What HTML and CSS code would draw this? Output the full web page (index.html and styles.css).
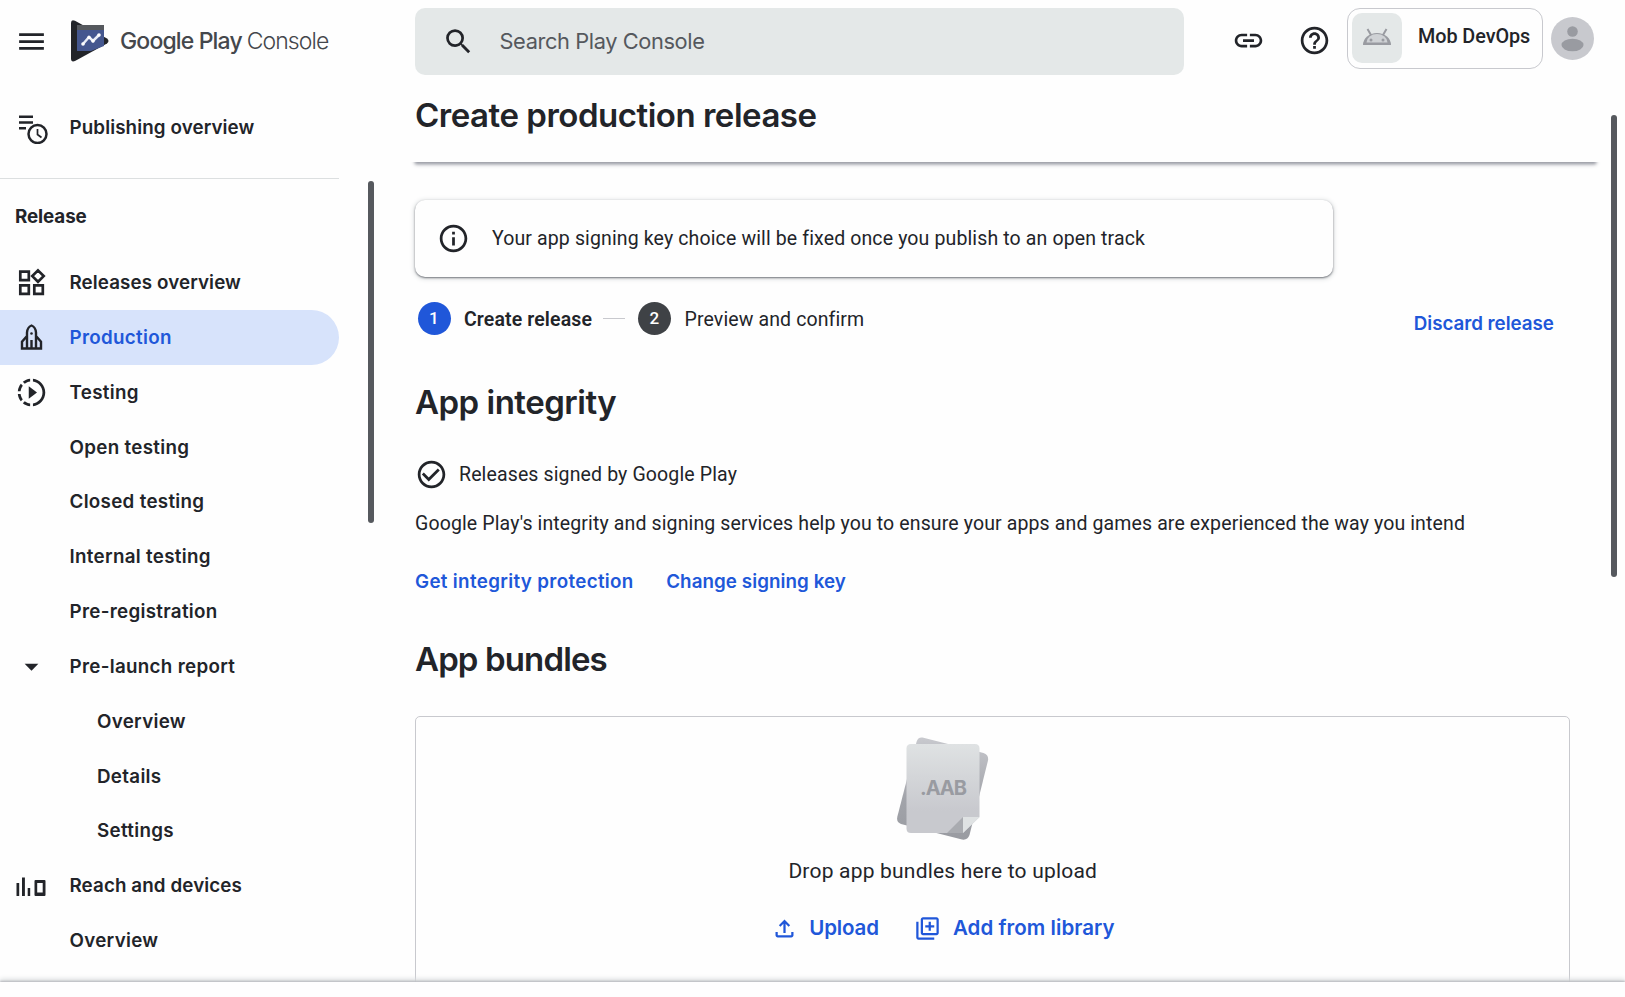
FILE: index.html
```html
<!DOCTYPE html>
<html lang="en">
<head>
<meta charset="utf-8">
<title>Google Play Console</title>
<link rel="stylesheet" href="styles.css">
</head>
<body>
<header class="topbar">
  <div class="brand">
    <svg class="icon" viewBox="0 0 24 24"><path d="M3 18h18v-2H3v2zm0-5h18v-2H3v2zm0-7v2h18V6H3z"/></svg>
    <svg class="logo" viewBox="0 0 38 42"><path d="M0 3Q0-1 4 .8L36 18.500Q39 21 36 23.500L4 41Q0 42.500 0 38.500Z" fill="#222429"/><path d="M6 5h27v21L20 31H6Z" fill="#45578f"/><path d="M6 5h27v5H6Z" fill="#55585d"/><path d="M12 24l6-7 4 4 6-6" fill="none" stroke="#e8ecf6" stroke-width="2.500"/><g fill="#fff"><circle cx="12" cy="24" r="1.800"/><circle cx="18" cy="17.500" r="1.800"/><circle cx="22" cy="21" r="1.800"/><circle cx="28" cy="15" r="1.800"/></g></svg>
    <div class="wordmark"><span class="wm-play">Google Play</span><span class="wm-console">Console</span></div>
  </div>
  <div class="search">
    <svg class="icon" viewBox="0 0 24 24"><path d="M15.500 14h-.79l-.28-.27A6.471 6.471 0 0 0 16 9.500 6.500 6.500 0 1 0 9.500 16c1.610 0 3.090-.59 4.230-1.570l.27.28v.79l5 4.990L20.490 19l-4.990-5zm-6 0C7.010 14 5 11.990 5 9.500S7.010 5 9.500 5 14 7.010 14 9.500 11.990 14 9.500 14z"/></svg>
    <span class="search-text">Search Play Console</span>
  </div>
  <div class="actions">
    <svg class="icon" viewBox="0 0 24 24"><path d="M3.900 12c0-1.710 1.390-3.100 3.100-3.100h4V7H7c-2.760 0-5 2.240-5 5s2.240 5 5 5h4v-1.900H7c-1.710 0-3.100-1.390-3.100-3.100zM8 13h8v-2H8v2zm9-6h-4v1.900h4c1.710 0 3.100 1.390 3.100 3.100s-1.390 3.100-3.100 3.100h-4V17h4c2.760 0 5-2.240 5-5s-2.240-5-5-5z"/></svg>
    <svg class="icon help" viewBox="0 0 24 24"><path d="M11 18h2v-2h-2v2zm1-16C6.480 2 2 6.480 2 12s4.480 10 10 10 10-4.480 10-10S17.520 2 12 2zm0 18c-4.410 0-8-3.590-8-8s3.590-8 8-8 8 3.590 8 8-3.590 8-8 8zm0-14c-2.210 0-4 1.790-4 4h2c0-1.100.9-2 2-2s2 .9 2 2c0 2-3 1.750-3 5h2c0-2.250 3-2.500 3-5 0-2.210-1.790-4-4-4z"/></svg>
    <div class="account">
      <div class="app-thumb"><svg width="30" height="18" viewBox="0 0 30 18"><path d="M1 17a14 12 0 0 1 28 0Z" fill="#999ba1"/><path d="M4.500 14.500a10.500 8.500 0 0 1 21 0Z" fill="#cfd2d5"/><path d="M5.500 1l3.500 6M24.500 1L21 7" stroke="#999ba1" stroke-width="2"/><circle cx="9" cy="12" r="1.500" fill="#999ba1"/><circle cx="21" cy="12" r="1.500" fill="#999ba1"/></svg></div>
      <span class="account-name">Mob DevOps</span>
    </div>
    <svg class="avatar" viewBox="0 0 43 43"><circle cx="21.500" cy="21.500" r="21.500" fill="#c8c9ce"/><circle cx="21.500" cy="14.500" r="5.300" fill="#999ba1"/><ellipse cx="21.500" cy="28" rx="11" ry="6.300" fill="#999ba1"/></svg>
  </div>
</header>
<div class="body">
  <div class="side">
    <nav class="nav">
      <a class="item tight"><svg class="icon" viewBox="0 0 33 33"><path d="M4 4.500h14v2.600H4zM4 10.200h14v2.600H4zM4 16h7v2.400H4z"/><circle cx="22.500" cy="23" r="10.800" fill="#fefefe"/><circle cx="22.500" cy="23" r="9" fill="none" stroke="#222429" stroke-width="2.500"/><path d="M22.500 18v5.500l4 3" fill="none" stroke="#222429" stroke-width="1.700"/></svg><span>Publishing overview</span></a>
      <h2 class="group"><span>Release</span></h2>
      <a class="item tight"><svg class="icon" viewBox="0 0 33 33"><path d="M5.300 5.700h8.500v8.500H5.300zM5.300 19.300h8.500v8.500H5.300zM19.300 19.300h8.500v8.500h-8.500zM23 4.400l5.700 5.700-5.700 5.700-5.700-5.700z" fill="none" stroke="#222429" stroke-width="2.700"/></svg><span>Releases overview</span></a>
      <a class="item active"><svg class="icon" viewBox="0 0 33 33"><path d="M12 27.500V11.500Q12.500 6 16.500 4.500Q20.500 6 21 11.500V27.500M12 15L7 20.800V27.500H26V20.800L21 15M16.500 19v8" fill="none" stroke="#222429" stroke-width="2.400"/><circle cx="16.500" cy="12.500" r="1.300"/></svg><span>Production</span></a>
      <a class="item"><svg class="icon" viewBox="0 0 24 24"><path d="M10 7.500v9l6-4.500zM11 4.070V2.050c-2.010.2-3.840 1-5.320 2.210L7.100 5.690c1.110-.86 2.440-1.440 3.900-1.620zM5.690 7.100L4.260 5.680C3.050 7.160 2.250 8.990 2.050 11h2.020c.18-1.460.76-2.790 1.620-3.900zM4.070 13H2.050c.2 2.010 1 3.840 2.210 5.320l1.430-1.430c-.86-1.100-1.440-2.430-1.620-3.890zm1.610 6.740C7.160 20.950 9 21.750 11 21.950v-2.020c-1.460-.18-2.790-.76-3.900-1.620l-1.420 1.430zM22 12c0 5.160-3.920 9.420-8.950 9.950v-2.020C16.970 19.410 20 16.050 20 12s-3.030-7.410-6.950-7.930V2.050C18.080 2.580 22 6.840 22 12z"/></svg><span>Testing</span></a>
      <a class="item sub"><span>Open testing</span></a>
      <a class="item sub"><span>Closed testing</span></a>
      <a class="item sub"><span>Internal testing</span></a>
      <a class="item sub"><span>Pre-registration</span></a>
      <a class="item"><svg class="icon" viewBox="0 0 24 24"><path d="M7 10l5 5 5-5z"/></svg><span>Pre-launch report</span></a>
      <a class="item sub deep"><span>Overview</span></a>
      <a class="item sub deep"><span>Details</span></a>
      <a class="item sub deep"><span>Settings</span></a>
      <a class="item tight"><svg class="icon" viewBox="0 0 33 33"><path d="M1.500 14h2.700v13H1.500zM7 8.500h2.900V27H7zM12.700 19h2.500v8h-2.500z"/><path fill-rule="evenodd" d="M20.500 11q-1 0-1 1v14q0 1 1 1h9q1 0 1-1v-14q0-1-1-1zM22.200 14h5.500v9.500h-5.500z"/></svg><span>Reach and devices</span></a>
      <a class="item sub"><span>Overview</span></a>
    </nav>
    <div class="thumb side-thumb"></div>
  </div>
  <main class="main">
    <div class="page-head"><h1>Create production release</h1></div>
    <section class="notice">
      <svg class="icon" viewBox="0 0 24 24"><path d="M11 7h2v2h-2zm0 4h2v6h-2zm1-9C6.480 2 2 6.480 2 12s4.480 10 10 10 10-4.480 10-10S17.520 2 12 2zm0 18c-4.410 0-8-3.590-8-8s3.590-8 8-8 8 3.590 8 8-3.590 8-8 8z"/></svg>
      <span>Your app signing key choice will be fixed once you publish to an open track</span>
    </section>
    <div class="steps">
      <span class="dot current">1</span><span class="step-name strong">Create release</span>
      <span class="dash"></span>
      <span class="dot">2</span><span class="step-name">Preview and confirm</span>
      <a class="link discard">Discard release</a>
    </div>
    <h2 class="section integrity">App integrity</h2>
    <div class="signed">
      <svg class="icon" viewBox="0 0 24 24"><path d="M16.590 7.580L10 14.170l-3.590-3.580L5 12l5 5 8-8zM12 2C6.480 2 2 6.480 2 12s4.480 10 10 10 10-4.480 10-10S17.520 2 12 2zm0 18c-4.420 0-8-3.580-8-8s3.580-8 8-8 8 3.580 8 8-3.580 8-8 8z"/></svg>
      <span>Releases signed by Google Play</span>
    </div>
    <p class="desc">Google Play's integrity and signing services help you to ensure your apps and games are experienced the way you intend</p>
    <div class="links"><a class="link protect">Get integrity protection</a><a class="link">Change signing key</a></div>
    <h2 class="section bundles">App bundles</h2>
    <section class="dropzone">
      <svg class="file" viewBox="0 0 92 103">
        <defs><linearGradient id="sheet" x1="0" y1="0" x2="0" y2="1"><stop offset="0" stop-color="#dfe2e3"/><stop offset=".75" stop-color="#c8c9ce"/></linearGradient><linearGradient id="back" x1="0" y1="0" x2="0" y2="1"><stop offset="0" stop-color="#c8c9ce"/><stop offset=".6" stop-color="#a2a4aa"/><stop offset="1" stop-color="#999ba1"/></linearGradient></defs>
        <path d="M25.500.600L86.500 16Q92 18 91 23.500L72.500 98Q70.500 103.500 65 102.500L4 87Q-1 85 .400 79.500L19.500 5Q21 0 25.500.600Z" fill="url(#back)"/>
        <path d="M14 7H78Q82.500 7 82.500 11.500V80L66 96H14Q9.500 96 9.500 91.500V11.500Q9.500 7 14 7Z" fill="url(#sheet)"/>
        <path d="M66 80L50 96H66Z" fill="#a9abb0"/><path d="M66 80H82.500L66 96Z" fill="#dfe2e3"/>
        <text x="23" y="58" textLength="47" class="file-ext">.AAB</text>
      </svg>
      <div class="drop-text">Drop app bundles here to upload</div>
      <div class="drop-actions">
        <a class="link upload"><svg class="icon small" viewBox="0 -960 960 960"><path d="M440-320v-326L336-542l-56-58 200-200 200 200-56 58-104-104v326h-80ZM240-160q-33 0-56.500-23.500T160-240v-120h80v120h480v-120h80v120q0 33-23.500 56.500T720-160H240Z"/></svg><span>Upload</span></a>
        <a class="link"><svg class="icon small" viewBox="0 0 24 24"><path d="M4 6H2v14c0 1.100.9 2 2 2h14v-2H4V6zm16-4H8c-1.100 0-2 .9-2 2v12c0 1.100.9 2 2 2h12c1.100 0 2-.9 2-2V4c0-1.100-.9-2-2-2zm0 14H8V4h12v12zM13 14h2v-3h3V9h-3V6h-2v3h-3v2h3z"/></svg><span>Add from library</span></a>
      </div>
    </section>
  </main>
  <div class="thumb main-thumb"></div>
</div>
<footer class="footer"></footer>
</body>
</html>
```
FILE: styles.css
```css
* { box-sizing: border-box; }
body {
  margin: 0;
  width: 1625px;
  height: 997px;
  overflow: hidden;
  display: flex;
  flex-direction: column;
  background: #fefefe;
  color: #222429;
  font-family: Inter, "Liberation Sans", sans-serif;
  font-size: 18.8px;
}
h1, h2, p { margin: 0; }
span, a, p { white-space: nowrap; }
.icon { width: 33px; height: 33px; flex: none; fill: #222429; display: block; }

/* Top bar */
.topbar { height: 82px; flex: none; display: flex; align-items: flex-start; }
.brand { width: 415px; height: 82px; padding-left: 15px; display: flex; align-items: center; }
.logo { width: 38px; height: 42px; margin-left: 23px; }
.wordmark { display: flex; gap: 5px; margin-left: 11px; line-height: 32px; font-size: 23px; color: #44474c; }
.wm-play { font-weight: 500; letter-spacing: -.85px; }
.wm-console { font-weight: 300; letter-spacing: -.95px; }
.search { width: 769px; height: 67px; margin-top: 8px; padding-left: 27px; border-radius: 10px; background: #e4e8e8; display: flex; align-items: center; }
.search-text { margin-left: 24.5px; padding-bottom: 1px; font-size: 21.8px; letter-spacing: -.39px; line-height: 30px; color: #55585d; }
.actions { display: flex; align-items: flex-start; margin-left: 48px; }
.actions > .icon { margin-top: 24px; }
.actions > .help { margin-left: 32.5px; }
.account { width: 196px; height: 61px; margin: 8px 0 0 16.5px; padding: 4px; border: 1.5px solid #c8c9ce; border-radius: 13px; display: flex; font-family: Roboto, sans-serif; font-weight: 500; font-size: 19.8px; letter-spacing: -.05px; }
.app-thumb { width: 50px; height: 50px; border-radius: 10px; background: #e4e8e8; display: flex; align-items: center; justify-content: center; padding-bottom: 3px; }
.account-name { margin-left: 16px; line-height: 48px; }
.avatar { width: 43px; height: 43px; margin: 16.5px 0 0 8px; }

/* Sidebar */
.body { flex: 1; min-height: 0; display: flex; }
.side { width: 415px; flex: none; display: flex; }
.nav { width: 338.5px; padding-top: 18px; }
.item { height: 54.83px; display: flex; align-items: center; padding-left: 15px; font-weight: 560; letter-spacing: .3px; }
.item > .icon { margin-right: 21.5px; }
.item.tight { letter-spacing: .1px; }
.item.sub { padding-left: 69.5px; }
.item.deep { padding-left: 97px; }
.group { height: 77.4px; margin-top: 23px; padding-left: 15px; border-top: 1.5px solid #dcdfe0; line-height: 76px; font-size: 18.8px; font-weight: 650; letter-spacing: -.1px; }
.active { background: #d7e3fb; border-radius: 0 28px 28px 0; color: #2057d9; }
.thumb { width: 6px; border-radius: 3px; background: #56595e; flex: none; }
.side-thumb { height: 342px; margin: 98.500px 0 0 29.5px; }
.main-thumb { height: 462px; margin: 33px 0 0 15px; }

/* Release form */
.main { width: 1181px; flex: none; }
.page-head { height: 80px; position: relative; }
.page-head::after { content: ""; position: absolute; left: 0; right: 0; bottom: 0; height: 20px; box-shadow: 0 2px 3px #9b9da6, 0 2px 5px #c8c9ce; clip-path: inset(20px -5px -8px -5px); }
h1 { font-size: 33px; font-weight: 620; line-height: 66px; letter-spacing: -.48px; }
.notice { width: 918px; height: 77px; margin-top: 38px; padding-left: 22px; border-radius: 10px; display: flex; align-items: center; box-shadow: 0 1px 2px #75787e, 0 1px 5px 1px #dcdfe0; }
.notice, .steps, .signed, .desc, .drop-text { font-family: Roboto, sans-serif; font-size: 19.5px; letter-spacing: .13px; }
.notice span { margin-left: 22px; }
.steps { height: 33px; margin-top: 25px; padding-left: 2.5px; display: flex; align-items: center; }
.dot { width: 33px; height: 33px; border-radius: 50%; background: #3f4246; color: #fff; font-weight: 500; font-size: 17px; line-height: 33px; text-align: center; }
.dot.current { background: #2057d9; }
.step-name { margin-left: 13.5px; padding-top: 2px; letter-spacing: .12px; }
.strong { font-weight: 600; }
.dash { width: 22px; height: 1.5px; margin: 0 13px 0 11px; background: #c8c9ce; }
.link { color: #2057d9; font-family: Inter, sans-serif; font-weight: 560; font-size: 18.8px; letter-spacing: .06px; }
.discard { margin: 9px 0 0 549.5px; letter-spacing: -.05px; }
.section { height: 44px; line-height: 44px; font-size: 33px; font-weight: 620; letter-spacing: -.5px; }
.integrity { margin-top: 45px; }
.signed { height: 31px; margin-top: 35px; display: flex; align-items: center; }
.signed span { margin-left: 11px; }
.desc { margin-top: 19px; line-height: 30px; letter-spacing: .125px; }
.links { height: 30px; margin-top: 28px; display: flex; gap: 32.5px; line-height: 30px; }
.protect { letter-spacing: .33px; }
.bundles { margin-top: 40px; letter-spacing: -.87px; }

/* Upload area */
.dropzone { width: 1155px; height: 280px; margin-top: 34.5px; padding: 20.5px 99.5px 0 0; border: 1.5px solid #c8c9ce; border-radius: 5px; display: flex; flex-direction: column; align-items: center; }
.file { width: 92px; height: 103px; flex: none; }
.file-ext { font: 700 20px Inter, sans-serif; fill: #999ba1; }
.drop-text { margin-top: 16px; line-height: 30px; font-size: 21px; letter-spacing: .2px; }
.drop-actions { margin-top: 27px; display: flex; gap: 35.5px; line-height: 30px; }
.drop-actions .link { display: flex; align-items: center; font-size: 20.5px; }
.drop-actions .upload { letter-spacing: -.15px; }
.icon.small { width: 27px; height: 27px; fill: #2057d9; margin-right: 11.5px; }

.footer { position: relative; z-index: 1; height: 15.5px; flex: none; background: #fefefe; box-shadow: 0 -1px 2px #b4b6bc, 0 -3px 5px #dcdfe0; }
```
